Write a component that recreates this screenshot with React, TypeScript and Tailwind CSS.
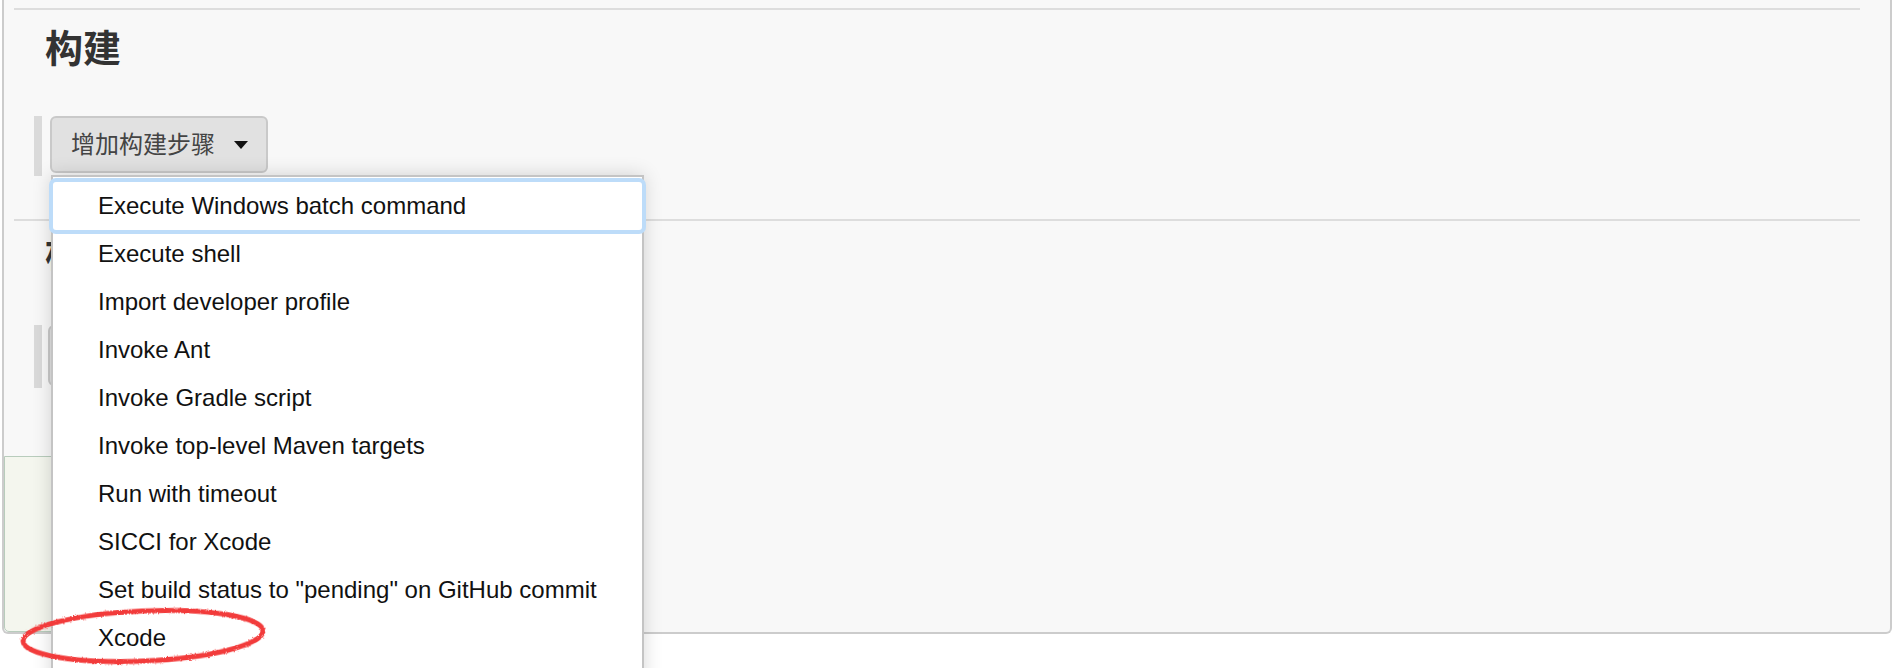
import React, {FC} from 'react';

const buildSteps: string[] = [
    'Execute Windows batch command',
    'Execute shell',
    'Import developer profile',
    'Invoke Ant',
    'Invoke Gradle script',
    'Invoke top-level Maven targets',
    'Run with timeout',
    'SICCI for Xcode',
    'Set build status to "pending" on GitHub commit',
    'Xcode',
];

const Caret: FC = () => (
    <svg width="14" height="8" viewBox="0 0 14 8" className="shrink-0">
        <path d="M0 0 L14 0 L7 8 Z" fill="#111"/>
    </svg>
);

const StepButton: FC<{ label: string, tall?: boolean }> = ({label, tall}) => (
    <div className="flex items-start">
        <div className={tall ? "w-[8px] h-[63px] bg-[#dadada]" : "w-[8px] h-[60px] bg-[#dadada]"}/>
        <div
            className={
                tall
                    ? "ml-[6px] h-[61px] flex items-center gap-[19px] pl-[19px] pr-[18px] rounded-[6px] border-2 border-[#c9c9c9] bg-[#e1e1e1] text-[24px] text-[#444]"
                    : "ml-[8px] h-[57px] flex items-center gap-[19px] pl-[19px] pr-[18px] rounded-[6px] border-2 border-[#c9c9c9] bg-[#e1e1e1] text-[24px] text-[#444]"
            }
        >
            <span>{label}</span>
            <Caret/>
        </div>
    </div>
);

const App: FC = () => {
    return (
        <div
            className="relative w-[1900px] h-[668px] overflow-hidden bg-white font-['Liberation_Sans','Noto_Sans_CJK_SC',sans-serif]">
            {/* config section panel */}
            <div
                className="
                    ml-[2px]
                    w-[1890px]
                    h-[634px]
                    flex
                    flex-col
                    border-x-2
                    border-b-2
                    border-[#cccccc]
                    rounded-b-[6px]
                    bg-[#f8f8f8]
                "
            >
                <div className="mt-[8px] ml-[10px] w-[1846px] h-[2px] bg-[#dddddd]"/>
                <h2 className="mt-[11px] pl-[41px] h-[50px] leading-[50px] text-[38px] font-bold text-[#333] font-['Noto_Sans_CJK_SC',sans-serif]">
                    构建
                </h2>
                <div className="mt-[45px] pl-[30px]">
                    <StepButton label="增加构建步骤"/>
                </div>
                <div className="mt-[43px] ml-[10px] w-[1846px] h-[2px] bg-[#dddddd]"/>
                <h2 className="mt-[5px] pl-[41px] h-[50px] leading-[50px] text-[38px] font-bold text-[#333] font-['Noto_Sans_CJK_SC',sans-serif]">
                    构建后操作
                </h2>
                <div className="mt-[49px] pl-[30px]">
                    <StepButton label="增加构建后操作步骤" tall/>
                </div>
                <div className="mt-auto w-[600px] h-[176px] border border-[#b8ccbc] rounded-bl-[5px] bg-[#f4f6ee]"/>
            </div>

            {/* dropdown menu of build steps */}
            <div
                className="
                    absolute
                    left-[51px]
                    top-[175px]
                    w-[593px]
                    h-[520px]
                    pt-[5px]
                    border-2
                    border-[#c4c4c4]
                    bg-white
                    shadow-[0_0_18px_rgba(0,0,0,0.16)]
                "
            >
                {buildSteps.map((step, i) => (
                    <div
                        key={step}
                        className={
                            i === 0
                                ? "relative z-10 h-[48px] flex items-center pl-[45px] text-[24px] text-[#111] bg-white rounded-[3px] ring-4 ring-[#bddcf9]"
                                : "h-[48px] flex items-center pl-[45px] text-[24px] text-[#111]"
                        }
                    >
                        {step}
                    </div>
                ))}
            </div>

            {/* hand drawn red mark round Xcode */}
            <svg className="absolute left-0 top-[598px] z-20" width="300" height="70" viewBox="0 0 300 70">
                <defs>
                    <filter id="rough">
                        <feTurbulence type="fractalNoise" baseFrequency="0.9" numOctaves="2" seed="3"/>
                        <feDisplacementMap in="SourceGraphic" scale="3"/>
                    </filter>
                </defs>
                <ellipse cx="143" cy="38" rx="120" ry="25" fill="none" stroke="#f23b3b" strokeWidth="5"
                         transform="rotate(-2.5 143 38)" filter="url(#rough)"/>
            </svg>
        </div>
    );
};

export default App;
